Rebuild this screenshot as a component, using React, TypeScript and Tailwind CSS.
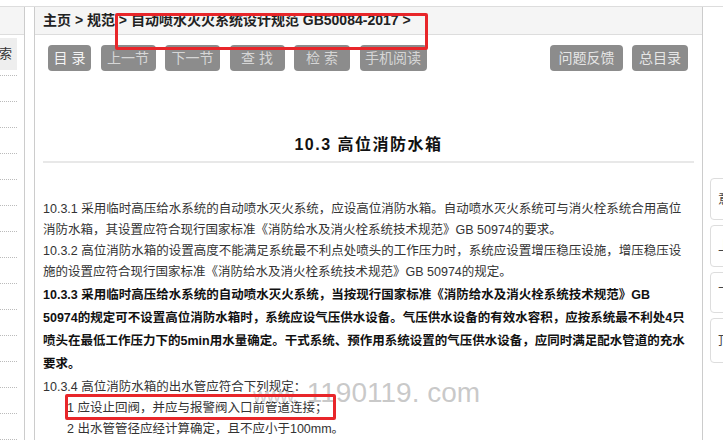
import React from 'react';

const font = 'font-["Liberation_Sans","Noto_Sans_CJK_SC",sans-serif]';

const leftButtons = [
  { label: '目 录', w: 'w-[43px]', bright: true },
  { label: '上一节', w: 'w-[55px]' },
  { label: '下一节', w: 'w-[55px]' },
  { label: '查 找', w: 'w-[55px]' },
  { label: '检 索', w: 'w-[56px]' },
  { label: '手机阅读', w: 'w-[67px]' },
];

const rightButtons = [
  { label: '问题反馈', w: 'w-[73px]' },
  { label: '总目录', w: 'w-[56px]' },
];

const regular = [
  '10.3.1 采用临时高压给水系统的自动喷水灭火系统，应设高位消防水箱。自动喷水灭火系统可与消火栓系统合用高位',
  '消防水箱，其设置应符合现行国家标准《消防给水及消火栓系统技术规范》GB 50974的要求。',
  '10.3.2 高位消防水箱的设置高度不能满足系统最不利点处喷头的工作压力时，系统应设置增压稳压设施，增压稳压设',
  '施的设置应符合现行国家标准《消防给水及消火栓系统技术规范》GB 50974的规定。',
];

const bold = [
  '10.3.3 采用临时高压给水系统的自动喷水灭火系统，当按现行国家标准《消防给水及消火栓系统技术规范》GB',
  '50974的规定可不设置高位消防水箱时，系统应设气压供水设备。气压供水设备的有效水容积，应按系统最不利处4只',
  '喷头在最低工作压力下的5min用水量确定。干式系统、预作用系统设置的气压供水设备，应同时满足配水管道的充水',
  '要求。',
];

const sideRows = Array.from({ length: 14 });

export default function App() {
  return (
    <div className={`relative w-[723px] h-[440px] overflow-hidden bg-white text-[#333] ${font}`}>
      <div className="h-[7px] border-b border-[#ddd]" />
      <div className="flex h-[433px]">
        {/* sidebar */}
        <aside className="w-[25px] border-r border-[#ccc] flex flex-col">
          <div className="h-[28px] bg-[#f5f5f5] border-b border-[#ddd]" />
          <div className="mt-[3px] w-[17px] h-[33px] bg-[#eee] flex items-center justify-end pr-[5px] overflow-hidden whitespace-nowrap text-[13px] text-[#333]">
            检索
          </div>
          <div className="w-[17px] h-[6px] border-b border-dotted border-[#bbb]" />
          {sideRows.map((_, i) => (
            <div key={i} className="w-[17px] h-[26px] shrink-0 border-b border-dotted border-[#bbb]" />
          ))}
        </aside>
        <div className="w-[9px]" />

        {/* main panel */}
        <main className="w-[669px] border-l border-r border-[#ccc] flex flex-col">
          <div className="h-[28px] bg-[#f5f5f5] border-b border-[#ddd] flex items-center pl-[8px] text-[14px] font-bold text-[#222] whitespace-nowrap">
            主页 &gt; 规范 &gt; 自动喷水灭火系统设计规范 GB50084-2017 &gt;
          </div>

          <div className="mt-[10px] flex justify-between pl-[13px] pr-[14px]">
            <div className="flex gap-[9.5px]">
              {leftButtons.map((b) => (
                <div
                  key={b.label}
                  className={`${b.w} h-[26px] rounded-[4px] bg-[#8c8c8c] flex items-center justify-center text-[14px] whitespace-pre ${
                    b.bright ? 'text-[#f4f4f4]' : 'text-[#d6d6d6]'
                  }`}
                >
                  {b.label}
                </div>
              ))}
            </div>
            <div className="flex gap-[9px]">
              {rightButtons.map((b) => (
                <div
                  key={b.label}
                  className={`${b.w} h-[26px] rounded-[4px] bg-[#8c8c8c] flex items-center justify-center text-[14px] text-[#e6e6e6]`}
                >
                  {b.label}
                </div>
              ))}
            </div>
          </div>

          <h1 className="mt-[64px] h-[20px] leading-[20px] text-center text-[16px] font-bold tracking-[1.5px] text-[#111]">
            10.3 高位消防水箱
          </h1>
          <div className="mt-[6px] mx-[8px] h-[2px] bg-[#e8e8e8]" />

          <div className="mt-[36px] px-[8px] text-[12.5px] whitespace-nowrap">
            {regular.map((l) => (
              <div key={l} className="h-[21px] leading-[21px] text-[#333]">
                {l}
              </div>
            ))}
            <div className="mt-[1px] font-bold text-[#111]">
              {bold.map((l) => (
                <div key={l} className="h-[23px] leading-[23px]">
                  {l}
                </div>
              ))}
            </div>
            <div className="text-[#333]">
              <div className="h-[21px] leading-[21px] mt-[1px]">10.3.4 高位消防水箱的出水管应符合下列规定：</div>
              <div className="h-[21px] leading-[21px] pl-[24px]">1 应设止回阀，并应与报警阀入口前管道连接；</div>
              <div className="h-[21px] leading-[21px] pl-[24px]">2 出水管管径应经计算确定，且不应小于100mm。</div>
            </div>
          </div>
        </main>
      </div>

      {/* floating side tools */}
      <div className="absolute left-[710px] top-[178px] flex flex-col gap-[5px]">
        {[
          { h: 'h-[42px]', c: '意' },
          { h: 'h-[42px]', c: '上' },
          { h: 'h-[41px]', c: '下' },
          { h: 'h-[45px]', c: '顶' },
        ].map((b) => (
          <div
            key={b.c}
            className={`${b.h} w-[24px] bg-white border border-[#ddd] rounded-l-[4px] flex items-center pl-[7px] text-[13px] text-[#444]`}
          >
            {b.c}
          </div>
        ))}
      </div>

      {/* watermark */}
      <div className="absolute left-[253px] top-[372px] flex items-baseline whitespace-nowrap pointer-events-none select-none">
        <span className="text-[20px] text-[#c4c4c4]/80 tracking-[-1px] mr-[10px]">www.</span>
        <span className="text-[28px] text-[#c0c0c0]/85">1190119. com</span>
      </div>

      {/* red annotations */}
      <div className="absolute left-[115px] top-[13px] w-[313px] h-[37px] border-[3px] border-[#e8262a] rounded-[2px]" />
      <div className="absolute left-[65px] top-[394px] w-[271px] h-[26px] border-[3px] border-[#e8262a] rounded-[2px]" />
    </div>
  );
}
